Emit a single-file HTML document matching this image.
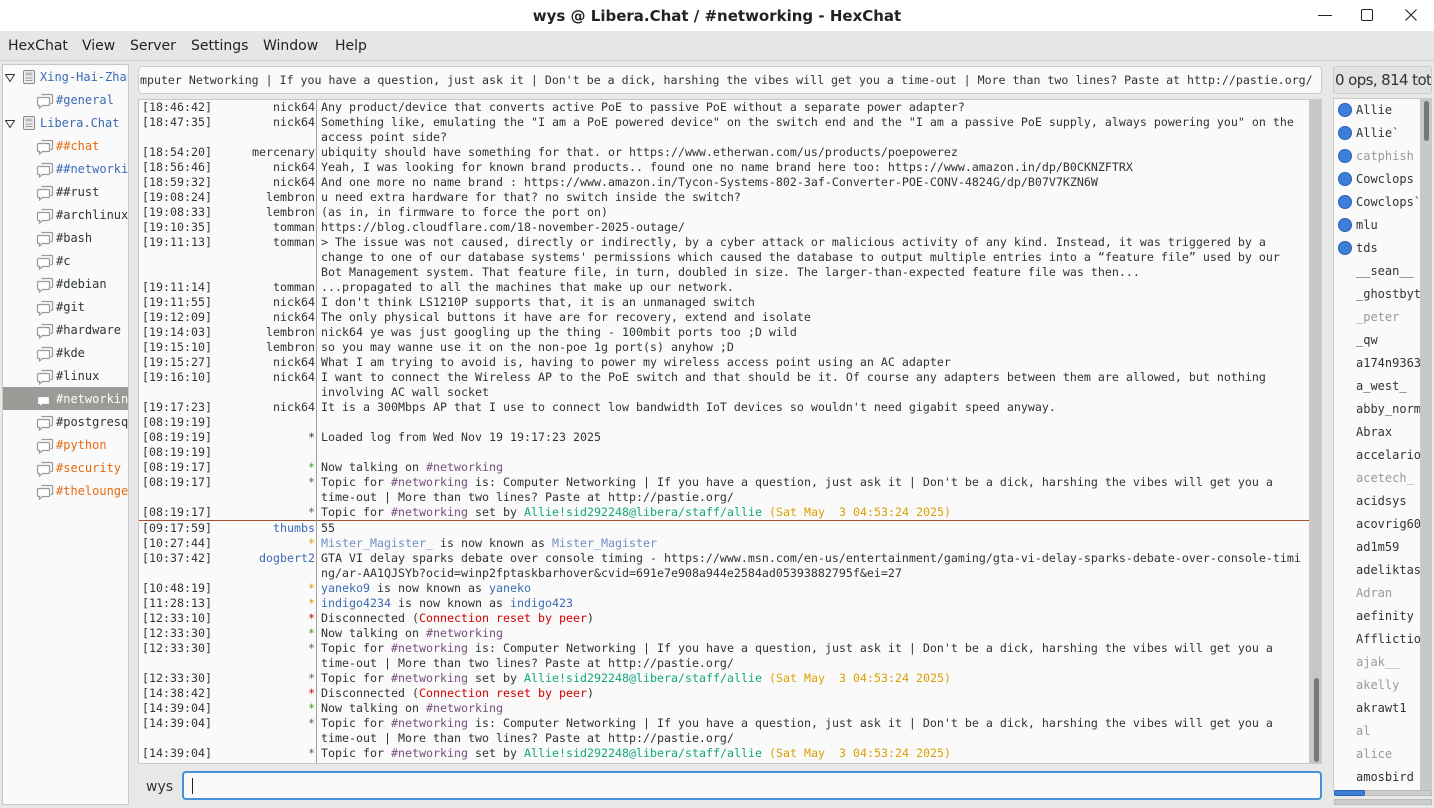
<!DOCTYPE html>
<html><head><meta charset="utf-8"><style>
*{margin:0;padding:0;box-sizing:border-box}
body{width:1434px;height:808px;overflow:hidden;background:#e8e8e8;font-family:"DejaVu Sans Mono","Liberation Mono",monospace;position:relative;color:#2e3436}
.abs{position:absolute}
#title{left:0;top:0;width:1434px;height:31px;background:#fff;font-family:"DejaVu Sans","Liberation Sans",sans-serif;font-weight:bold;font-size:15px;text-align:center;line-height:32px;color:#222}
#menu{left:0;top:31px;width:1434px;height:30px;background:#e6e6e6;border-bottom:1px solid #d0d0d0;font-family:"DejaVu Sans","Liberation Sans",sans-serif;font-size:14px;color:#222}
#menu span{position:absolute;top:7px}
.panel{background:#fafafa;border:1px solid #c8c8c8}
#tree{left:2px;top:64px;width:127px;height:741px;overflow:hidden}
.ti{position:absolute;font-size:12px;white-space:nowrap;height:23px;line-height:23px;left:0}
.ti svg{position:absolute;left:33px;top:4px}
.ti .l{position:absolute;left:53px}
#topic{left:138px;top:66px;width:1184px;height:28px;background:#fafafa;border:1px solid #ccc;border-radius:4px;font-size:11.6px;line-height:27px;white-space:pre;overflow:hidden;padding-left:1px}
#chat{left:138px;top:99px;width:1172px;height:665px;overflow:hidden}
#sep{left:316px;top:100px;width:1px;height:663px;background:#a0a0a0}
.r{position:absolute;left:0;height:15px;font-size:11.63px;line-height:15px;white-space:pre;width:1170px}
.ts{position:absolute;left:3px}
.nk{position:absolute;right:994px;text-align:right}
.tx{position:absolute;left:182px}
#sb{left:1310px;top:99px;width:12px;height:665px;background:#c8c8c8}
#sbt{left:1314px;top:678px;width:5px;height:84px;background:#777;border-radius:3px}
#input{left:182px;top:771px;width:1140px;height:29px;background:#fafafa;border:2px solid #4a90d9;border-radius:4px}
#ulh{left:1333px;top:66px;width:99px;height:28px;background:#e2e2e2;border:1px solid #ccc;border-radius:3px;font-family:"DejaVu Sans","Liberation Sans",sans-serif;font-size:15px;line-height:27px;white-space:nowrap;overflow:hidden;padding-left:1px;letter-spacing:-0.6px}
#ul{left:1333px;top:98px;width:88px;height:693px;overflow:hidden}
.u{position:absolute;font-size:12px;white-space:nowrap;height:23px;line-height:22px}
.dot{position:absolute;left:4px;width:14px;height:14px;border-radius:50%;background:#3c7fd8;border:1px solid #2a60b0}
.g{color:#999}.o{color:#e66a10}.b{color:#3a6bb5}.p{color:#75507b}.tl{color:#13a77f}.y{color:#d9a000}.rd{color:#d00000}.lb{color:#6f8fc4}.gr{color:#4e9a06}
</style></head><body>
<svg width="0" height="0" style="position:absolute"><defs>
<symbol id="bub" viewBox="0 0 18 16"><path d="M5.5 1.5h10a1 1 0 0 1 1 1v7a1 1 0 0 1-1 1h-1" fill="none" stroke="#999" stroke-width="1.2"/><path d="M2.5 4.5h10a1 1 0 0 1 1 1v6a1 1 0 0 1-1 1h-6l-3 2.5v-2.5h-1a1 1 0 0 1-1-1v-6a1 1 0 0 1 1-1z" fill="#fff" stroke="#999" stroke-width="1.2"/></symbol>
<symbol id="srv" viewBox="0 0 14 16"><rect x="1.5" y="1.5" width="11" height="13" rx="1.5" fill="#eee" stroke="#888"/><rect x="3.5" y="3.5" width="7" height="3" fill="#bbb"/><rect x="3.5" y="8.5" width="7" height="1" fill="#999"/><rect x="3.5" y="11" width="7" height="1" fill="#999"/></symbol>
</defs></svg>
<div id="title" class="abs">wys @ Libera.Chat / #networking - HexChat</div>
<div class="abs" style="left:1318px;top:15px;width:14px;height:1px;background:#222"></div>
<div class="abs" style="left:1361px;top:9px;width:12px;height:12px;border:1px solid #222;border-radius:2px"></div>
<svg class="abs" style="left:1405px;top:9px" width="12" height="12"><path d="M0.5 0.5L11.5 11.5M11.5 0.5L0.5 11.5" stroke="#222" stroke-width="1.1"/></svg>
<div id="menu" class="abs"><span style="left:8px">HexChat</span><span style="left:82px">View</span><span style="left:130px">Server</span><span style="left:191px">Settings</span><span style="left:263px">Window</span><span style="left:335px">Help</span></div>

<div id="tree" class="abs panel">
<div class="ti" style="top:1px;width:125px"><svg style="position:absolute;left:2px;top:8px" width="10" height="8"><path d="M0.5 0.5h9l-4.5 7z" fill="none" stroke="#333"/></svg><svg style="left:19px;top:3px" width="14" height="16"><use href="#srv"/></svg><span class="b" style="position:absolute;left:37px">Xing-Hai-Zhan</span></div>
<div class="ti" style="top:24px"><svg width="18" height="16"><use href="#bub"/></svg><span class="l b">#general</span></div>
<div class="ti" style="top:47px;width:125px"><svg style="position:absolute;left:2px;top:8px" width="10" height="8"><path d="M0.5 0.5h9l-4.5 7z" fill="none" stroke="#333"/></svg><svg style="left:19px;top:3px" width="14" height="16"><use href="#srv"/></svg><span class="b" style="position:absolute;left:37px">Libera.Chat</span></div>
<div class="ti" style="top:70px"><svg width="18" height="16"><use href="#bub"/></svg><span class="l o">##chat</span></div>
<div class="ti" style="top:93px"><svg width="18" height="16"><use href="#bub"/></svg><span class="l b">##networking</span></div>
<div class="ti" style="top:116px"><svg width="18" height="16"><use href="#bub"/></svg><span class="l">##rust</span></div>
<div class="ti" style="top:139px"><svg width="18" height="16"><use href="#bub"/></svg><span class="l">#archlinux</span></div>
<div class="ti" style="top:162px"><svg width="18" height="16"><use href="#bub"/></svg><span class="l">#bash</span></div>
<div class="ti" style="top:185px"><svg width="18" height="16"><use href="#bub"/></svg><span class="l">#c</span></div>
<div class="ti" style="top:208px"><svg width="18" height="16"><use href="#bub"/></svg><span class="l">#debian</span></div>
<div class="ti" style="top:231px"><svg width="18" height="16"><use href="#bub"/></svg><span class="l">#git</span></div>
<div class="ti" style="top:254px"><svg width="18" height="16"><use href="#bub"/></svg><span class="l">#hardware</span></div>
<div class="ti" style="top:277px"><svg width="18" height="16"><use href="#bub"/></svg><span class="l">#kde</span></div>
<div class="ti" style="top:300px"><svg width="18" height="16"><use href="#bub"/></svg><span class="l">#linux</span></div>
<div class="ti" style="top:322px;width:126px;background:#9a9a96"><svg width="18" height="16" style="top:5px"><use href="#bub"/></svg><span class="l" style="color:#fff;top:1px">#networking</span></div>
<div class="ti" style="top:346px"><svg width="18" height="16"><use href="#bub"/></svg><span class="l">#postgresql</span></div>
<div class="ti" style="top:369px"><svg width="18" height="16"><use href="#bub"/></svg><span class="l o">#python</span></div>
<div class="ti" style="top:392px"><svg width="18" height="16"><use href="#bub"/></svg><span class="l o">#security</span></div>
<div class="ti" style="top:415px"><svg width="18" height="16"><use href="#bub"/></svg><span class="l o">#thelounge</span></div>
</div>

<div id="topic" class="abs">mputer Networking | If you have a question, just ask it | Don't be a dick, harshing the vibes will get you a time-out | More than two lines? Paste at http://pastie.org/</div>

<div id="chat" class="abs panel">
<div class="r" style="top:0"><span class="ts">[18:46:42]</span><span class="nk">nick64</span><span class="tx">Any product/device that converts active PoE to passive PoE without a separate power adapter?</span></div>
<div class="r" style="top:15px"><span class="ts">[18:47:35]</span><span class="nk">nick64</span><span class="tx">Something like, emulating the "I am a PoE powered device" on the switch end and the "I am a passive PoE supply, always powering you" on the</span></div>
<div class="r" style="top:30px"><span class="tx">access point side?</span></div>
<div class="r" style="top:45px"><span class="ts">[18:54:20]</span><span class="nk">mercenary</span><span class="tx">ubiquity should have something for that. or https://www.etherwan.com/us/products/poepowerez</span></div>
<div class="r" style="top:60px"><span class="ts">[18:56:46]</span><span class="nk">nick64</span><span class="tx">Yeah, I was looking for known brand products.. found one no name brand here too: https://www.amazon.in/dp/B0CKNZFTRX</span></div>
<div class="r" style="top:75px"><span class="ts">[18:59:32]</span><span class="nk">nick64</span><span class="tx">And one more no name brand : https://www.amazon.in/Tycon-Systems-802-3af-Converter-POE-CONV-4824G/dp/B07V7KZN6W</span></div>
<div class="r" style="top:90px"><span class="ts">[19:08:24]</span><span class="nk">lembron</span><span class="tx">u need extra hardware for that? no switch inside the switch?</span></div>
<div class="r" style="top:105px"><span class="ts">[19:08:33]</span><span class="nk">lembron</span><span class="tx">(as in, in firmware to force the port on)</span></div>
<div class="r" style="top:120px"><span class="ts">[19:10:35]</span><span class="nk">tomman</span><span class="tx">https://blog.cloudflare.com/18-november-2025-outage/</span></div>
<div class="r" style="top:135px"><span class="ts">[19:11:13]</span><span class="nk">tomman</span><span class="tx">&gt; The issue was not caused, directly or indirectly, by a cyber attack or malicious activity of any kind. Instead, it was triggered by a</span></div>
<div class="r" style="top:150px"><span class="tx">change to one of our database systems' permissions which caused the database to output multiple entries into a “feature file” used by our</span></div>
<div class="r" style="top:165px"><span class="tx">Bot Management system. That feature file, in turn, doubled in size. The larger-than-expected feature file was then...</span></div>
<div class="r" style="top:180px"><span class="ts">[19:11:14]</span><span class="nk">tomman</span><span class="tx">...propagated to all the machines that make up our network.</span></div>
<div class="r" style="top:195px"><span class="ts">[19:11:55]</span><span class="nk">nick64</span><span class="tx">I don't think LS1210P supports that, it is an unmanaged switch</span></div>
<div class="r" style="top:210px"><span class="ts">[19:12:09]</span><span class="nk">nick64</span><span class="tx">The only physical buttons it have are for recovery, extend and isolate</span></div>
<div class="r" style="top:225px"><span class="ts">[19:14:03]</span><span class="nk">lembron</span><span class="tx">nick64 ye was just googling up the thing - 100mbit ports too ;D wild</span></div>
<div class="r" style="top:240px"><span class="ts">[19:15:10]</span><span class="nk">lembron</span><span class="tx">so you may wanne use it on the non-poe 1g port(s) anyhow ;D</span></div>
<div class="r" style="top:255px"><span class="ts">[19:15:27]</span><span class="nk">nick64</span><span class="tx">What I am trying to avoid is, having to power my wireless access point using an AC adapter</span></div>
<div class="r" style="top:270px"><span class="ts">[19:16:10]</span><span class="nk">nick64</span><span class="tx">I want to connect the Wireless AP to the PoE switch and that should be it. Of course any adapters between them are allowed, but nothing</span></div>
<div class="r" style="top:285px"><span class="tx">involving AC wall socket</span></div>
<div class="r" style="top:300px"><span class="ts">[19:17:23]</span><span class="nk">nick64</span><span class="tx">It is a 300Mbps AP that I use to connect low bandwidth IoT devices so wouldn't need gigabit speed anyway.</span></div>
<div class="r" style="top:315px"><span class="ts">[08:19:19]</span></div>
<div class="r" style="top:330px"><span class="ts">[08:19:19]</span><span class="nk">*</span><span class="tx">Loaded log from Wed Nov 19 19:17:23 2025</span></div>
<div class="r" style="top:345px"><span class="ts">[08:19:19]</span></div>
<div class="r" style="top:360px"><span class="ts">[08:19:17]</span><span class="nk gr">*</span><span class="tx">Now talking on <span class="p">#networking</span></span></div>
<div class="r" style="top:375px"><span class="ts">[08:19:17]</span><span class="nk p">*</span><span class="tx">Topic for <span class="p">#networking</span> is: Computer Networking | If you have a question, just ask it | Don't be a dick, harshing the vibes will get you a</span></div>
<div class="r" style="top:390px"><span class="tx">time-out | More than two lines? Paste at http://pastie.org/</span></div>
<div class="r" style="top:405px"><span class="ts">[08:19:17]</span><span class="nk p">*</span><span class="tx">Topic for <span class="p">#networking</span> set by <span class="tl">Allie!sid292248@libera/staff/allie</span> <span class="y">(Sat May  3 04:53:24 2025)</span></span></div>
<div class="abs" style="left:0;top:420px;width:1170px;height:1px;background:#a0522d"></div>
<div class="r" style="top:421px"><span class="ts">[09:17:59]</span><span class="nk b">thumbs</span><span class="tx">55</span></div>
<div class="r" style="top:436px"><span class="ts">[10:27:44]</span><span class="nk y">*</span><span class="tx"><span class="lb">Mister_Magister_</span> is now known as <span class="lb">Mister_Magister</span></span></div>
<div class="r" style="top:451px"><span class="ts">[10:37:42]</span><span class="nk b">dogbert2</span><span class="tx">GTA VI delay sparks debate over console timing - https://www.msn.com/en-us/entertainment/gaming/gta-vi-delay-sparks-debate-over-console-timi</span></div>
<div class="r" style="top:466px"><span class="tx">ng/ar-AA1QJSYb?ocid=winp2fptaskbarhover&amp;cvid=691e7e908a944e2584ad05393882795f&amp;ei=27</span></div>
<div class="r" style="top:481px"><span class="ts">[10:48:19]</span><span class="nk y">*</span><span class="tx"><span class="b">yaneko9</span> is now known as <span class="b">yaneko</span></span></div>
<div class="r" style="top:496px"><span class="ts">[11:28:13]</span><span class="nk y">*</span><span class="tx"><span class="b">indigo4234</span> is now known as <span class="b">indigo423</span></span></div>
<div class="r" style="top:511px"><span class="ts">[12:33:10]</span><span class="nk rd">*</span><span class="tx">Disconnected (<span class="rd">Connection reset by peer</span>)</span></div>
<div class="r" style="top:526px"><span class="ts">[12:33:30]</span><span class="nk gr">*</span><span class="tx">Now talking on <span class="p">#networking</span></span></div>
<div class="r" style="top:541px"><span class="ts">[12:33:30]</span><span class="nk p">*</span><span class="tx">Topic for <span class="p">#networking</span> is: Computer Networking | If you have a question, just ask it | Don't be a dick, harshing the vibes will get you a</span></div>
<div class="r" style="top:556px"><span class="tx">time-out | More than two lines? Paste at http://pastie.org/</span></div>
<div class="r" style="top:571px"><span class="ts">[12:33:30]</span><span class="nk p">*</span><span class="tx">Topic for <span class="p">#networking</span> set by <span class="tl">Allie!sid292248@libera/staff/allie</span> <span class="y">(Sat May  3 04:53:24 2025)</span></span></div>
<div class="r" style="top:586px"><span class="ts">[14:38:42]</span><span class="nk rd">*</span><span class="tx">Disconnected (<span class="rd">Connection reset by peer</span>)</span></div>
<div class="r" style="top:601px"><span class="ts">[14:39:04]</span><span class="nk gr">*</span><span class="tx">Now talking on <span class="p">#networking</span></span></div>
<div class="r" style="top:616px"><span class="ts">[14:39:04]</span><span class="nk p">*</span><span class="tx">Topic for <span class="p">#networking</span> is: Computer Networking | If you have a question, just ask it | Don't be a dick, harshing the vibes will get you a</span></div>
<div class="r" style="top:631px"><span class="tx">time-out | More than two lines? Paste at http://pastie.org/</span></div>
<div class="r" style="top:646px"><span class="ts">[14:39:04]</span><span class="nk p">*</span><span class="tx">Topic for <span class="p">#networking</span> set by <span class="tl">Allie!sid292248@libera/staff/allie</span> <span class="y">(Sat May  3 04:53:24 2025)</span></span></div>
</div>
<div id="sep" class="abs"></div>
<div id="sb" class="abs"></div><div id="sbt" class="abs"></div>

<div class="abs" style="left:146px;top:779px;font-family:'DejaVu Sans','Liberation Sans',sans-serif;font-size:14px;color:#333">wys</div>
<div id="input" class="abs"><div style="position:absolute;left:8px;top:5px;width:1px;height:16px;background:#222"></div></div>

<div id="ulh" class="abs">0 ops, 814 total</div>
<div id="ul" class="abs panel">
<div class="u" style="top:0"><span class="dot" style="top:4px"></span><span style="position:absolute;left:22px">Allie</span></div>
<div class="u" style="top:23px"><span class="dot" style="top:4px"></span><span style="position:absolute;left:22px">Allie`</span></div>
<div class="u g" style="top:46px"><span class="dot" style="top:4px"></span><span style="position:absolute;left:22px">catphish</span></div>
<div class="u" style="top:69px"><span class="dot" style="top:4px"></span><span style="position:absolute;left:22px">Cowclops</span></div>
<div class="u" style="top:92px"><span class="dot" style="top:4px"></span><span style="position:absolute;left:22px">Cowclops`</span></div>
<div class="u" style="top:115px"><span class="dot" style="top:4px"></span><span style="position:absolute;left:22px">mlu</span></div>
<div class="u" style="top:138px"><span class="dot" style="top:4px"></span><span style="position:absolute;left:22px">tds</span></div>
<div class="u" style="top:161px;left:22px">__sean__</div>
<div class="u" style="top:184px;left:22px">_ghostbyte</div>
<div class="u g" style="top:207px;left:22px">_peter</div>
<div class="u" style="top:230px;left:22px">_qw</div>
<div class="u" style="top:253px;left:22px">a174n9363</div>
<div class="u" style="top:276px;left:22px">a_west_</div>
<div class="u" style="top:299px;left:22px">abby_norm</div>
<div class="u" style="top:322px;left:22px">Abrax</div>
<div class="u" style="top:345px;left:22px">accelario</div>
<div class="u g" style="top:368px;left:22px">acetech_</div>
<div class="u" style="top:391px;left:22px">acidsys</div>
<div class="u" style="top:414px;left:22px">acovrig60</div>
<div class="u" style="top:437px;left:22px">ad1m59</div>
<div class="u" style="top:460px;left:22px">adeliktas</div>
<div class="u g" style="top:483px;left:22px">Adran</div>
<div class="u" style="top:506px;left:22px">aefinity</div>
<div class="u" style="top:529px;left:22px">Affliction</div>
<div class="u g" style="top:552px;left:22px">ajak__</div>
<div class="u g" style="top:575px;left:22px">akelly</div>
<div class="u" style="top:598px;left:22px">akrawt1</div>
<div class="u g" style="top:621px;left:22px">al</div>
<div class="u g" style="top:644px;left:22px">alice</div>
<div class="u" style="top:667px;left:22px">amosbird</div>
</div>
<div class="abs" style="left:1421px;top:98px;width:11px;height:693px;background:#c8c8c8"></div>
<div class="abs" style="left:1424px;top:101px;width:5px;height:40px;background:#777;border-radius:3px"></div>
<div class="abs" style="left:1334px;top:790px;width:98px;height:6px;background:#ccc;border:1px solid #bbb"></div>
<div class="abs" style="left:1334px;top:790px;width:31px;height:6px;background:#3c7fd8;border:1px solid #2a60b0;border-radius:2px"></div>
<div class="abs" style="left:1334px;top:799px;width:98px;height:6px;background:#ccc;border:1px solid #bbb"></div>
</body></html>
